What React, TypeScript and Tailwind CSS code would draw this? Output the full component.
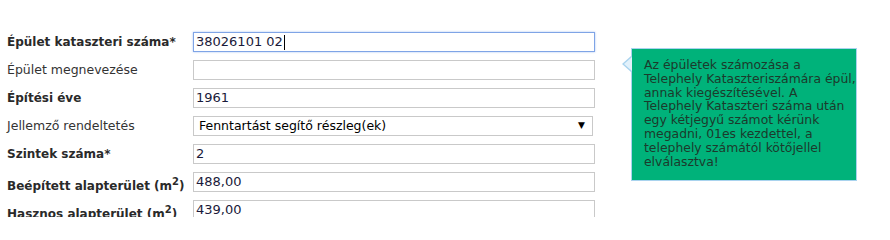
import React from "react";

interface Row {
  label: React.ReactNode;
  bold: boolean;
  value?: string;
  select?: boolean;
  focused?: boolean;
  sup?: boolean;
}

const M2 = (
  <>
    (m<span className="relative -top-[5px] text-[10px] leading-none">2</span>)
  </>
);

const rows: Row[] = [
  { label: "Épület kataszteri száma*", bold: true, value: "38026101 02", focused: true },
  { label: "Épület megnevezése", bold: false, value: "" },
  { label: "Építési éve", bold: true, value: "1961" },
  { label: "Jellemző rendeltetés", bold: false, value: "Fenntartást segítő részleg(ek)", select: true },
  { label: "Szintek száma*", bold: true, value: "2" },
  { label: <>Beépített alapterület {M2}</>, bold: true, value: "488,00", sup: true },
  { label: <>Hasznos alapterület {M2}</>, bold: true, value: "439,00", sup: true },
];

const tipLines = [
  "Az épületek számozása a",
  "Telephely Kataszteriszámára épül,",
  "annak kiegészítésével. A",
  "Telephely Kataszteri száma után",
  "egy kétjegyű számot kérünk",
  "megadni, 01es kezdettel, a",
  "telephely számától kötőjellel",
  "elválasztva!",
];

export default function App() {
  return (
    <div
      className="relative w-[890px] h-[217px] overflow-hidden bg-white text-[#333] text-[13px]"
      style={{ fontFamily: '"DejaVu Sans", Verdana, sans-serif' }}
    >
      <div className="pt-[28px] pl-[7px]">
        {rows.map((row, i) => (
          <div key={i} className="flex items-center h-[28px]">
            <div
              className={`w-[186px] whitespace-nowrap ${row.sup ? "pt-[8px]" : ""} ${
                row.bold ? "font-bold text-[12px] text-[#2a2a2a]" : "text-[12.5px] text-[#333]"
              }`}
            >
              {row.label}
            </div>
            {row.select ? (
              <div className="flex items-center justify-between w-[400px] h-[20px] border border-[#c9c9c9] pl-[5px] pr-[7px] text-black text-[12.5px]">
                <span>{row.value}</span>
                <span className="text-[9px]">▼</span>
              </div>
            ) : (
              <div
                className={`flex items-center w-[402px] h-[20px] border pl-[2px] text-[#1a1a3a] ${
                  row.focused
                    ? "border-[#7fa4e6] shadow-[0_0_2px_#a8c4f2]"
                    : "border-[#c9c9c9]"
                }`}
              >
                <span>{row.value}</span>
                {row.focused && <span className="w-px h-[15px] bg-black ml-px" />}
              </div>
            )}
          </div>
        ))}
      </div>

      <div className="absolute left-[631px] top-[48px] w-[226px] h-[133px] bg-[#00b27a] border border-[#a9d3ee] pl-[12px] pt-[9px] text-[12.4px] leading-[13.8px] text-[#1c3a2c]">
        <div className="absolute left-[-10px] top-[7px] w-0 h-0 border-y-[8px] border-y-transparent border-r-[9px] border-r-[#a9d3ee]" />
        <div className="absolute left-[-8px] top-[8px] w-0 h-0 border-y-[7px] border-y-transparent border-r-[8px] border-r-[#e2f1fb]" />
        {tipLines.map((l, i) => (
          <div key={i} className="whitespace-nowrap">
            {l}
          </div>
        ))}
      </div>
    </div>
  );
}
